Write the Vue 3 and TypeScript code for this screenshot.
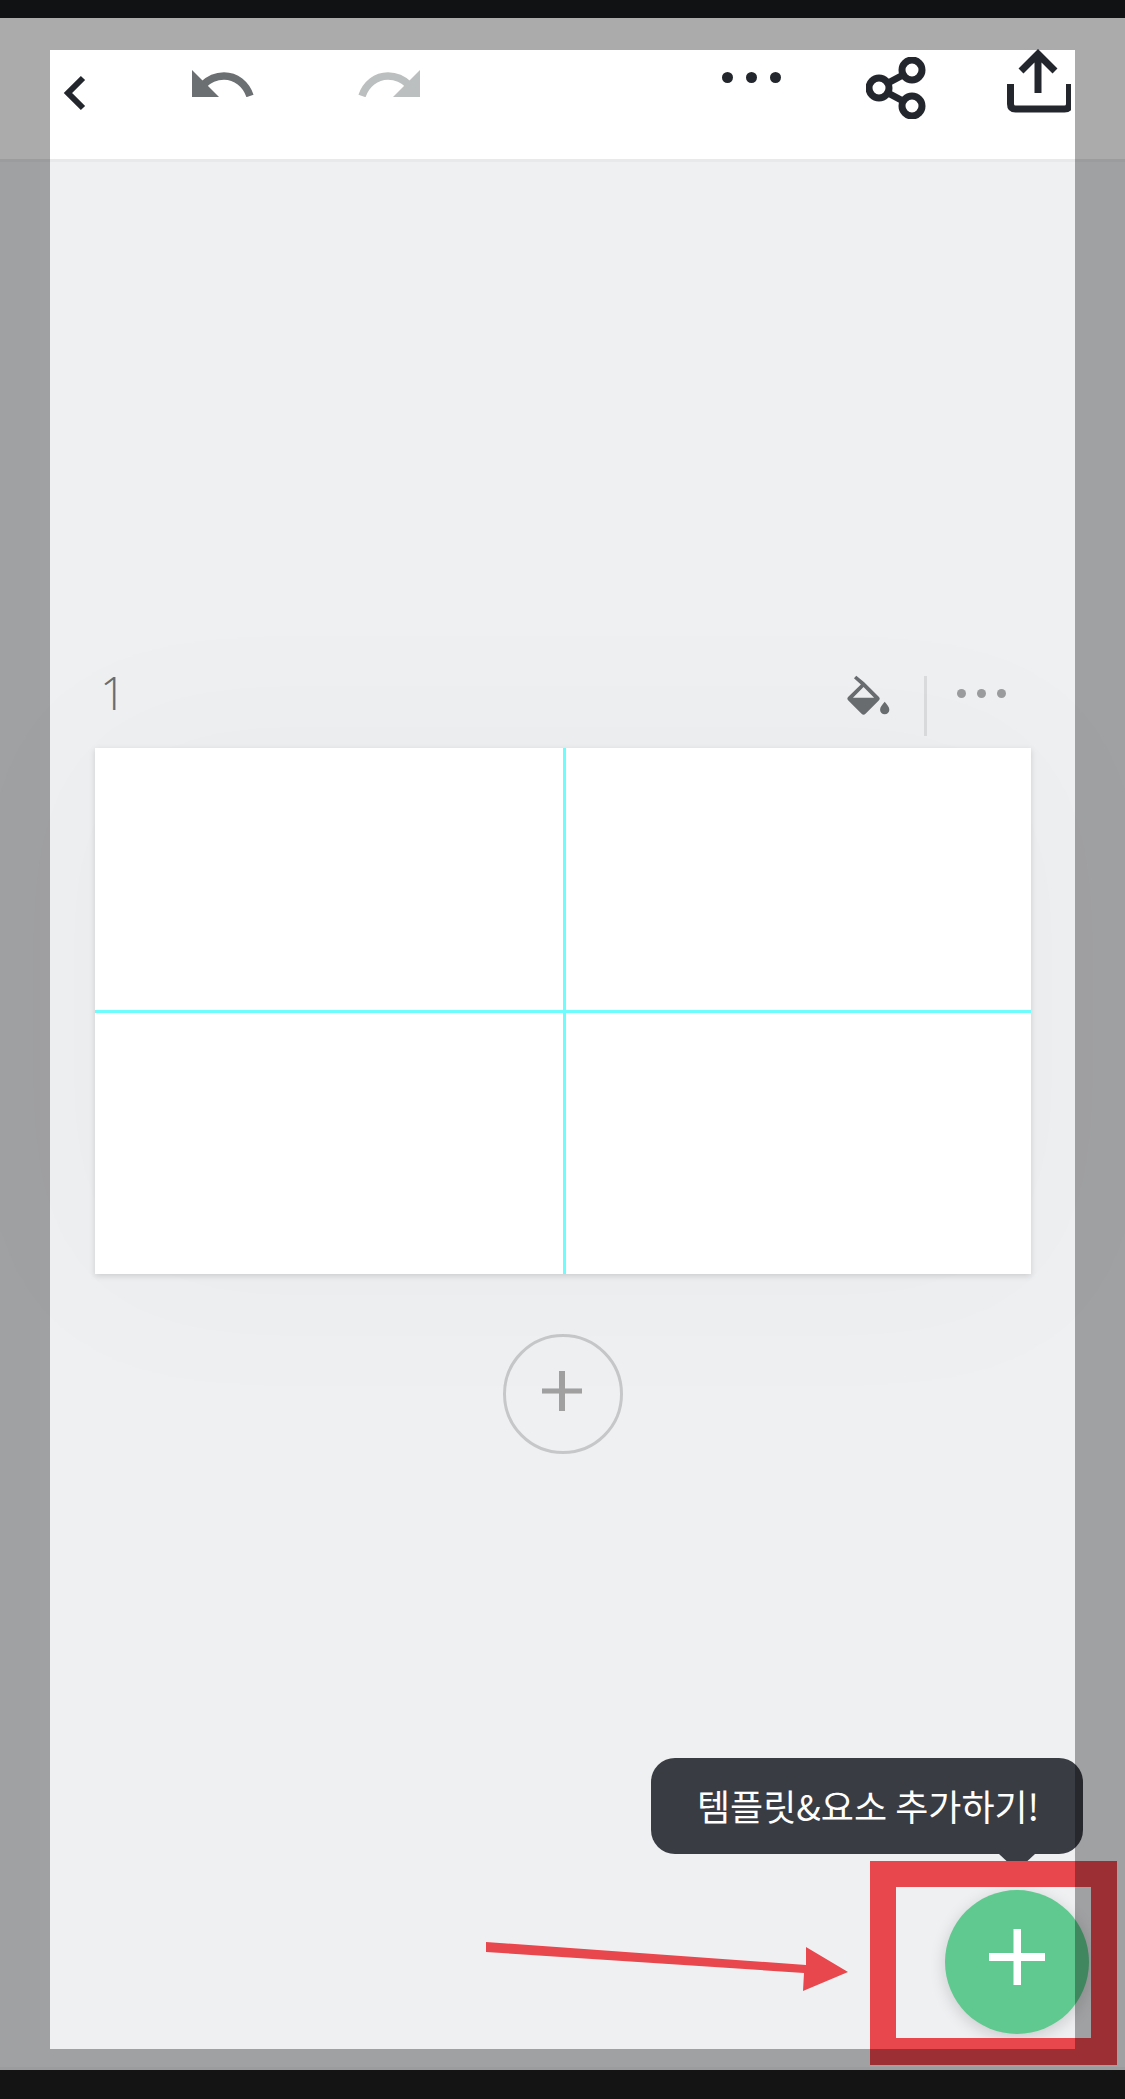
<template>
  <div class="app">
    <div class="black-top"></div>

    <div class="screen">
      <!-- 상단 툴바 -->
      <header class="toolbar">
        <svg class="ic-back" viewBox="0 0 23 36">
          <path d="M20 3 5 18l15 15" fill="none" stroke="#23272d" stroke-width="6" />
        </svg>
        <svg class="ic-undo" viewBox="192 70 62 27" fill="#6c6f71">
          <path d="M192 70v27h27z" />
          <path d="M250 96c-4-12-14-20-26-20-9 0-16 4-21 9" fill="none" stroke="#6c6f71" stroke-width="7.5" />
        </svg>
        <svg class="ic-redo" viewBox="192 70 62 27" fill="#bcbfbf">
          <path d="M192 70v27h27z" />
          <path d="M250 96c-4-12-14-20-26-20-9 0-16 4-21 9" fill="none" stroke="#bcbfbf" stroke-width="7.5" />
        </svg>
        <div class="dots dots-dark">
          <span v-for="n in 3" :key="n"></span>
        </div>
        <svg class="ic-share" viewBox="868 57 60 62" fill="none" stroke="#23272d" stroke-width="7">
          <circle cx="881" cy="88" r="10" />
          <circle cx="914" cy="70" r="10" />
          <circle cx="914" cy="106" r="10" />
          <path d="M890 83l15-8M890 93l15 8" />
        </svg>
        <svg class="ic-upload" viewBox="1010 49 64 64" fill="none" stroke="#23272d" stroke-width="7">
          <path d="M1041 93V54M1024 71l17-17 17 17" />
          <path d="M1013.500 84v20q0 5 5 5h49q5 0 5-5V84" />
        </svg>
      </header>

      <main class="editor">
        <div class="page-head">
          <span class="page-no">1</span>
          <div class="page-tools">
            <svg class="ic-fill" viewBox="195 95 140 130" fill="#6a6d70">
              <path d="M228 103l-7 8 21 19-38 37q-6 6 0 11l40 40q6 6 12 0l40-40q6-5 0-11l-44-44zM250 137l32 33h-64z" fill-rule="evenodd" />
              <path d="M314 182c-8 10-14 16-14 24a14 14 0 0 0 28 0c0-8-6-14-14-24z" />
            </svg>
            <i class="divider"></i>
            <div class="dots dots-light">
              <span v-for="n in 3" :key="n"></span>
            </div>
          </div>
        </div>

        <div class="page-card">
          <i class="guide guide-v"></i>
          <i class="guide guide-h"></i>
        </div>

        <button class="add-page">
          <svg viewBox="0 0 40 40" width="40" height="40">
            <path d="M0 17h40v6H0z" fill="#c4c5c6" />
            <path d="M0 18h40v4H0z" fill="#a0a0a0" />
            <path d="M17 0h6v40h-6z" fill="#a0a0a0" />
          </svg>
        </button>
      </main>
    </div>

    <div class="black-bottom"></div>

    <!-- 추가 버튼 말풍선 -->
    <div class="tooltip">템플릿&amp;요소 추가하기!</div>
    <button class="fab">
      <svg viewBox="0 0 56 56" width="56" height="56">
        <path d="M24.500 0h7.500v56h-7.500zM0 24h56v8H0z" fill="#fff" />
      </svg>
    </button>

    <!-- 안내 표시 -->
    <svg class="callout-arrow" viewBox="480 1935 375 65">
      <path d="M486 1942l320 23 0-18 42 25-45 19 1-18-318-21z" fill="#e8474e" />
    </svg>
    <div class="callout-box"></div>

    <div class="dim"></div>
  </div>
</template>

<script setup lang="ts">
</script>

<style>
html,
body {
  background: #141414;
}
</style>

<style scoped>
.app {
  position: relative;
  width: 1125px;
  height: 2099px;
  display: flex;
  flex-direction: column;
  overflow: hidden;
  font-family: "Noto Sans CJK KR", "Noto Sans", sans-serif;
}
.black-top {
  height: 18px;
  background: #101214;
}
.black-bottom {
  height: 29px;
  background: #141414;
}
.screen {
  flex: 1;
  display: flex;
  flex-direction: column;
  background: #eff0f2;
  border-bottom: 3px solid #e8e9ea;
}

/* toolbar */
.toolbar {
  height: 141px;
  flex: none;
  display: flex;
  align-items: flex-start;
  padding-left: 63px;
  background: #fff;
  border-bottom: 3px solid #e8e9ea;
}
.ic-back {
  width: 23px;
  height: 36px;
  margin-top: 57px;
}
.ic-undo {
  width: 62px;
  height: 27px;
  margin: 52px 0 0 106px;
}
.ic-redo {
  width: 62px;
  height: 27px;
  margin: 52px 0 0 104px;
  transform: scaleX(-1);
}
.dots {
  display: flex;
}
.dots span {
  border-radius: 50%;
}
.dots-dark {
  gap: 13px;
  margin: 54px 0 0 302px;
}
.dots-dark span {
  width: 11px;
  height: 11px;
  background: #23272d;
}
.ic-share {
  width: 60px;
  height: 62px;
  margin: 39px 0 0 85px;
}
.ic-upload {
  width: 64px;
  height: 64px;
  margin: 31px 0 0 81px;
}

/* editor */
.editor {
  flex: 1;
  display: flex;
  flex-direction: column;
  padding: 514px 94px 0 95px;
}
.page-head {
  height: 60px;
  margin-bottom: 12px;
  display: flex;
  align-items: flex-start;
  justify-content: space-between;
}
.page-no {
  margin-left: 5px;
  font-family: "Open Sans", sans-serif;
  font-weight: 300;
  font-size: 46px;
  line-height: 60px;
  margin-top: -14px;
  color: #6a6d70;
}
.page-tools {
  display: flex;
  align-items: flex-start;
  padding-right: 25px;
}
.ic-fill {
  width: 47px;
  height: 43px;
  margin-top: -3px;
}
.divider {
  width: 3px;
  height: 60px;
  margin-left: 32px;
  background: #dadbdc;
}
.dots-light {
  gap: 11px;
  margin: 13px 0 0 30px;
}
.dots-light span {
  width: 9px;
  height: 9px;
  background: #9b9c9e;
}
.page-card {
  position: relative;
  height: 526px;
  background: #fff;
  box-shadow: 0 2px 6px rgba(0, 0, 0, 0.14), 0 0 180px 20px rgba(0, 0, 0, 0.025);
}
.guide {
  position: absolute;
  background: #6ffcfc;
}
.guide-v {
  left: 468px;
  top: 0;
  bottom: 0;
  width: 3px;
}
.guide-h {
  top: 262px;
  left: 0;
  right: 0;
  height: 3px;
}
.add-page {
  align-self: center;
  width: 120px;
  height: 120px;
  margin-top: 60px;
  padding: 0 3px 6px 0;
  display: flex;
  align-items: center;
  justify-content: center;
  background: transparent;
  border: 3px solid #c6c7c8;
  border-radius: 50%;
}

/* tooltip + fab */
.tooltip {
  position: absolute;
  left: 651px;
  top: 1758px;
  width: 432px;
  height: 96px;
  box-sizing: border-box;
  padding-left: 46px;
  border-radius: 24px;
  background: #3a3c44;
  color: #fff;
  font-size: 36px;
  line-height: 94px;
  white-space: nowrap;
}
.tooltip::after {
  content: "";
  position: absolute;
  left: 348px;
  top: 96px;
  width: 36px;
  height: 8px;
  background: #3a3c44;
  clip-path: polygon(0 0, 100% 0, 76% 100%, 24% 100%);
}
.fab {
  position: absolute;
  left: 945px;
  top: 1890px;
  width: 144px;
  height: 144px;
  padding: 0 0 10px;
  display: flex;
  align-items: center;
  justify-content: center;
  border: 0;
  border-radius: 50%;
  background: #60c98f;
  box-shadow: 0 4px 16px rgba(0, 0, 0, 0.16);
}
.callout-arrow {
  position: absolute;
  left: 480px;
  top: 1935px;
  width: 375px;
  height: 65px;
}
.callout-box {
  position: absolute;
  left: 870px;
  top: 1861px;
  width: 247px;
  height: 204px;
  box-sizing: border-box;
  border: 26px solid #e8474e;
  border-bottom-width: 27px;
}
.dim {
  position: absolute;
  left: 0;
  right: 0;
  top: 18px;
  bottom: 29px;
  box-sizing: border-box;
  border-style: solid;
  border-color: rgba(0, 0, 0, 0.33);
  border-width: 32px 50px 21px;
  pointer-events: none;
}
</style>
